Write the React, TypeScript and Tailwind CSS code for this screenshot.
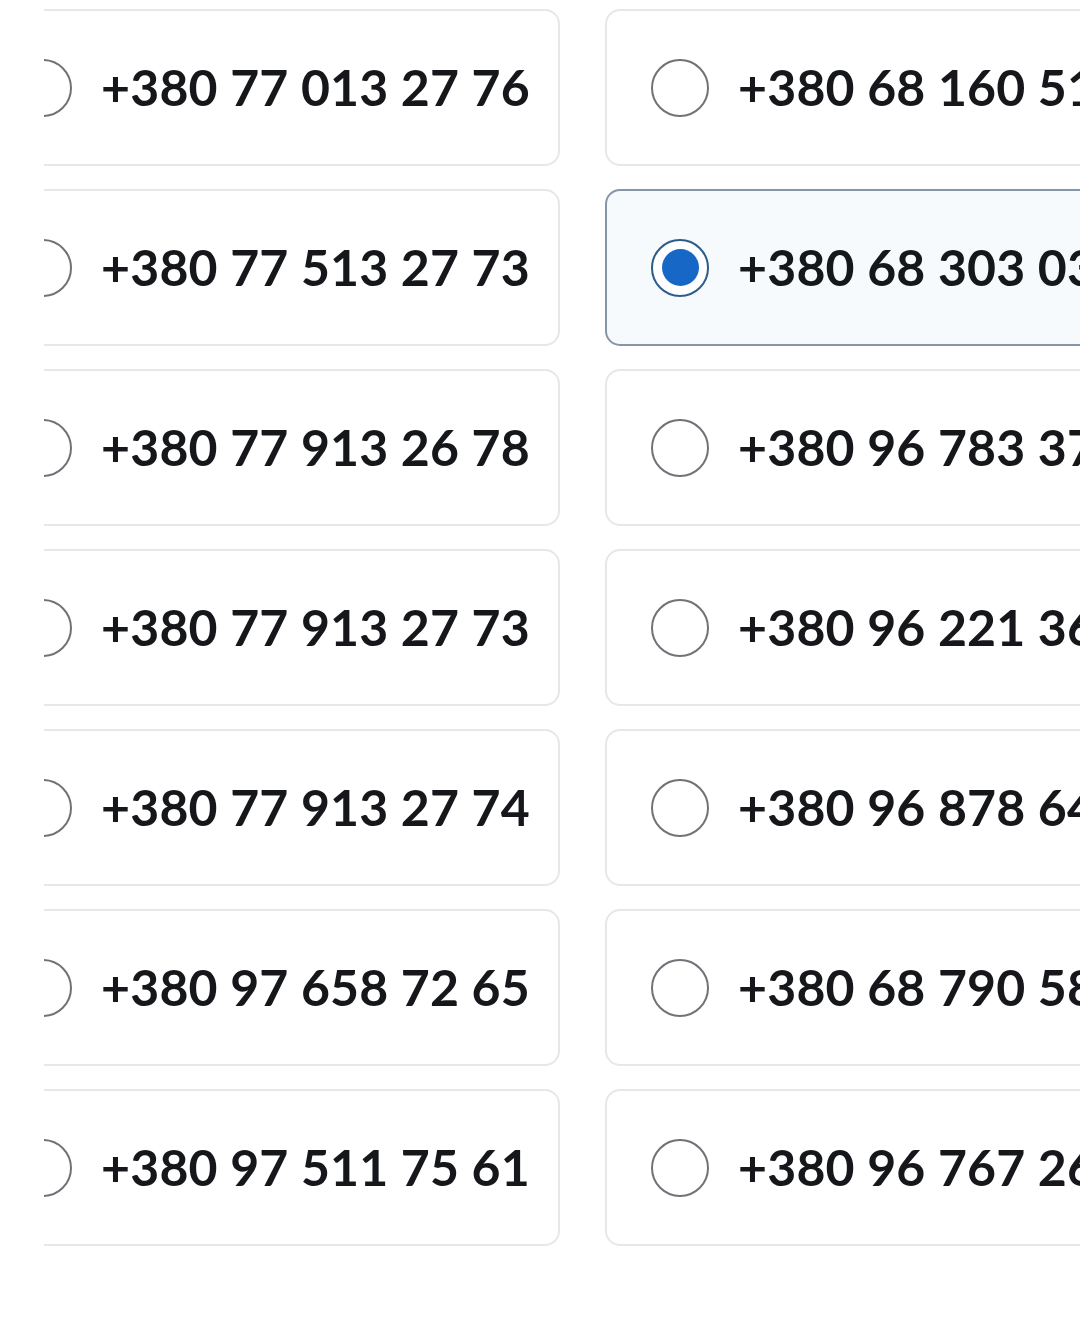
import React from "react";

const left = [
  "+380 77 013 27 76",
  "+380 77 513 27 73",
  "+380 77 913 26 78",
  "+380 77 913 27 73",
  "+380 77 913 27 74",
  "+380 97 658 72 65",
  "+380 97 511 75 61",
];
const right = [
  "+380 68 160 51 42",
  "+380 68 303 03 11",
  "+380 96 783 37 20",
  "+380 96 221 36 18",
  "+380 96 878 64 05",
  "+380 68 790 58 33",
  "+380 96 767 26 14",
];

function Card({ phone, selected }: { phone: string; selected?: boolean }) {
  return (
    <div
      className={
        "flex h-[157px] w-[592px] shrink-0 items-center rounded-[15px] border-2 pl-[44px] " +
        (selected ? "border-[#8796a6] bg-[#f6fafd]" : "border-[#e6e7e9] bg-white")
      }
    >
      <div
        className={
          "flex h-[58px] w-[58px] shrink-0 items-center justify-center rounded-full border-[2px] " +
          (selected ? "border-[#2d5c8b] bg-white" : "border-[#6f7377] bg-white")
        }
      >
        {selected && <div className="h-[37px] w-[37px] rounded-full bg-[#1667c6]" />}
      </div>
      <span
        className="ml-[29px] whitespace-nowrap text-[50px] font-bold tracking-[0.2px] text-[#15171a]"
        style={{ fontFamily: "Lato, 'Noto Sans', sans-serif" }}
      >
        {phone}
      </span>
    </div>
  );
}

export default function App() {
  return (
    <div className="h-[1321px] w-[1080px] bg-white pl-[44px]">
      <div className="h-full w-full overflow-hidden">
        <div className="ml-[-76px] flex flex-col gap-[23px] pt-[9px]">
          {left.map((p, i) => (
            <div key={i} className="flex gap-[45px]">
              <Card phone={p} />
              <Card phone={right[i]} selected={i === 1} />
            </div>
          ))}
        </div>
      </div>
    </div>
  );
}
